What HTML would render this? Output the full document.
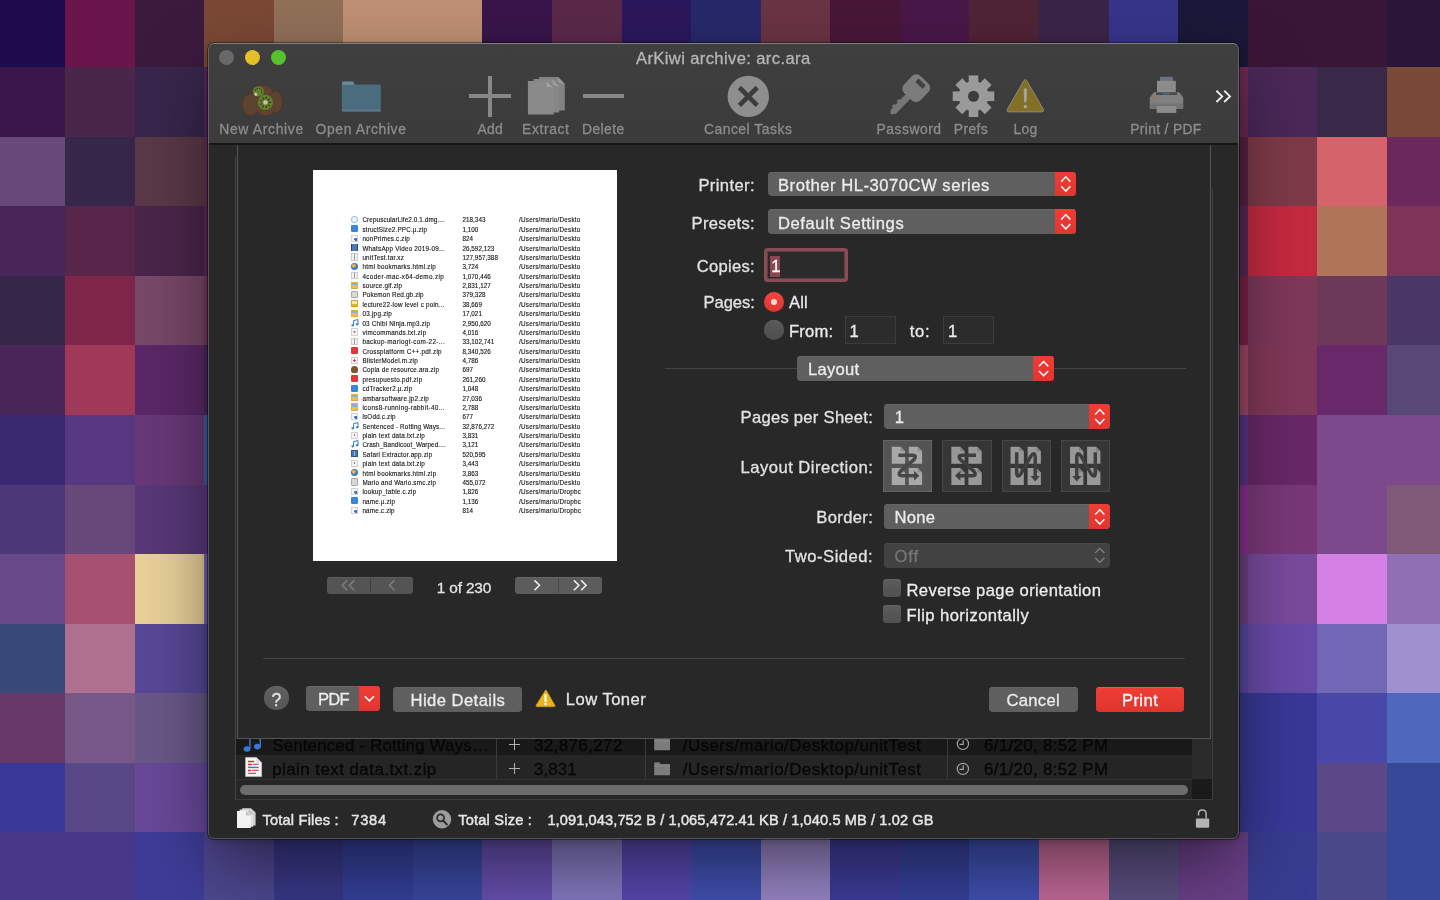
<!DOCTYPE html>
<html lang="en"><head><meta charset="utf-8"><title>ArKiwi archive: arc.ara</title>
<style>
html,body{margin:0;padding:0;width:1440px;height:900px;overflow:hidden;background:#2a1a40;font-family:"Liberation Sans",sans-serif}
#mos{position:absolute;left:0;top:0;width:1440px;height:900px;overflow:hidden}
#mos i{position:absolute;display:block}
.a{position:absolute;display:block;box-sizing:border-box}
.t{position:absolute;white-space:pre;line-height:20px;height:20px;-webkit-text-stroke:.3px currentColor}
#shadow{position:absolute;left:209px;top:44px;width:1029px;height:794px;border-radius:6px;box-shadow:0 30px 70px -4px rgba(0,0,0,.52),0 2px 10px rgba(0,0,0,.28)}
#win{position:absolute;left:208.2px;top:42.6px;width:1030.6px;height:796.2px;border-radius:6px;background:#282828;overflow:hidden;box-shadow:0 0 0 .6px rgba(0,0,0,.75)}
#tb{position:absolute;left:0;top:0;width:100%;height:101px;background:linear-gradient(#3f3f3f,#3b3b3b);box-sizing:border-box;border-radius:6px 6px 0 0}
#winb{position:absolute;left:208.2px;top:42.6px;width:1030.6px;height:796.2px;border-radius:6px;box-sizing:border-box;border:1px solid rgba(255,255,255,.2);border-top-color:rgba(255,255,255,.34);pointer-events:none}
svg{position:absolute;overflow:visible}

#root{position:absolute;left:0;top:0;width:1440px;height:900px;will-change:transform}

</style></head>
<body>
<div id="mos"><i style="left:0px;top:0px;width:66.55px;height:68.7px;background:#1c0a4c"></i><i style="left:65.05px;top:0px;width:71.07px;height:68.7px;background:#6a164c"></i><i style="left:134.62px;top:0px;width:71.07px;height:68.7px;background:#3c1a3e"></i><i style="left:204.19px;top:0px;width:71.07px;height:68.7px;background:#7a4835"></i><i style="left:273.76px;top:0px;width:71.07px;height:68.7px;background:#917058"></i><i style="left:343.33px;top:0px;width:71.07px;height:68.7px;background:#be9074"></i><i style="left:412.9px;top:0px;width:71.07px;height:68.7px;background:#be9074"></i><i style="left:482.47px;top:0px;width:71.07px;height:68.7px;background:#38154a"></i><i style="left:552.04px;top:0px;width:71.07px;height:68.7px;background:#5a2849"></i><i style="left:621.61px;top:0px;width:71.07px;height:68.7px;background:#2a185c"></i><i style="left:691.18px;top:0px;width:71.07px;height:68.7px;background:#27286a"></i><i style="left:760.75px;top:0px;width:71.07px;height:68.7px;background:#693443"></i><i style="left:830.32px;top:0px;width:71.07px;height:68.7px;background:#481736"></i><i style="left:899.89px;top:0px;width:71.07px;height:68.7px;background:#481848"></i><i style="left:969.46px;top:0px;width:71.07px;height:68.7px;background:#4f2436"></i><i style="left:1039.03px;top:0px;width:71.07px;height:68.7px;background:#3a2548"></i><i style="left:1108.6px;top:0px;width:71.07px;height:68.7px;background:#37358a"></i><i style="left:1178.17px;top:0px;width:71.07px;height:68.7px;background:#1a1738"></i><i style="left:1247.74px;top:0px;width:71.07px;height:68.7px;background:#3a1636"></i><i style="left:1317.31px;top:0px;width:71.07px;height:68.7px;background:#3a1636"></i><i style="left:1386.88px;top:0px;width:54.62px;height:68.7px;background:#2a1638"></i><i style="left:0px;top:67.2px;width:66.55px;height:71.05px;background:#38164c"></i><i style="left:65.05px;top:67.2px;width:71.07px;height:71.05px;background:#4a264a"></i><i style="left:134.62px;top:67.2px;width:71.07px;height:71.05px;background:#38264c"></i><i style="left:204.19px;top:67.2px;width:71.07px;height:71.05px;background:#56285c"></i><i style="left:1178.17px;top:67.2px;width:71.07px;height:71.05px;background:#6a2a52"></i><i style="left:1247.74px;top:67.2px;width:71.07px;height:71.05px;background:#4a2858"></i><i style="left:1317.31px;top:67.2px;width:71.07px;height:71.05px;background:#392848"></i><i style="left:1386.88px;top:67.2px;width:54.62px;height:71.05px;background:#7a4a38"></i><i style="left:0px;top:136.75px;width:66.55px;height:71.05px;background:#684878"></i><i style="left:65.05px;top:136.75px;width:71.07px;height:71.05px;background:#36264a"></i><i style="left:134.62px;top:136.75px;width:71.07px;height:71.05px;background:#5a3848"></i><i style="left:204.19px;top:136.75px;width:71.07px;height:71.05px;background:#6a3058"></i><i style="left:1178.17px;top:136.75px;width:71.07px;height:71.05px;background:#5a2044"></i><i style="left:1247.74px;top:136.75px;width:71.07px;height:71.05px;background:#7e3a48"></i><i style="left:1317.31px;top:136.75px;width:71.07px;height:71.05px;background:#d4636b"></i><i style="left:1386.88px;top:136.75px;width:54.62px;height:71.05px;background:#6b285c"></i><i style="left:0px;top:206.3px;width:66.55px;height:71.05px;background:#48265a"></i><i style="left:65.05px;top:206.3px;width:71.07px;height:71.05px;background:#58264a"></i><i style="left:134.62px;top:206.3px;width:71.07px;height:71.05px;background:#4a264a"></i><i style="left:204.19px;top:206.3px;width:71.07px;height:71.05px;background:#62285e"></i><i style="left:1178.17px;top:206.3px;width:71.07px;height:71.05px;background:#5a2858"></i><i style="left:1247.74px;top:206.3px;width:71.07px;height:71.05px;background:#c42a40"></i><i style="left:1317.31px;top:206.3px;width:71.07px;height:71.05px;background:#b07458"></i><i style="left:1386.88px;top:206.3px;width:54.62px;height:71.05px;background:#7e3458"></i><i style="left:0px;top:275.85px;width:66.55px;height:71.05px;background:#36264a"></i><i style="left:65.05px;top:275.85px;width:71.07px;height:71.05px;background:#80264a"></i><i style="left:134.62px;top:275.85px;width:71.07px;height:71.05px;background:#784868"></i><i style="left:204.19px;top:275.85px;width:71.07px;height:71.05px;background:#7a3c68"></i><i style="left:1178.17px;top:275.85px;width:71.07px;height:71.05px;background:#7a2248"></i><i style="left:1247.74px;top:275.85px;width:71.07px;height:71.05px;background:#7e3858"></i><i style="left:1317.31px;top:275.85px;width:71.07px;height:71.05px;background:#6c3a58"></i><i style="left:1386.88px;top:275.85px;width:54.62px;height:71.05px;background:#4b3668"></i><i style="left:0px;top:345.4px;width:66.55px;height:71.05px;background:#48265a"></i><i style="left:65.05px;top:345.4px;width:71.07px;height:71.05px;background:#a03858"></i><i style="left:134.62px;top:345.4px;width:71.07px;height:71.05px;background:#5a2868"></i><i style="left:204.19px;top:345.4px;width:71.07px;height:71.05px;background:#4e2664"></i><i style="left:1178.17px;top:345.4px;width:71.07px;height:71.05px;background:#a04868"></i><i style="left:1247.74px;top:345.4px;width:71.07px;height:71.05px;background:#803858"></i><i style="left:1317.31px;top:345.4px;width:71.07px;height:71.05px;background:#68286a"></i><i style="left:1386.88px;top:345.4px;width:54.62px;height:71.05px;background:#584878"></i><i style="left:0px;top:414.95px;width:66.55px;height:71.05px;background:#3a2870"></i><i style="left:65.05px;top:414.95px;width:71.07px;height:71.05px;background:#583880"></i><i style="left:134.62px;top:414.95px;width:71.07px;height:71.05px;background:#683878"></i><i style="left:204.19px;top:414.95px;width:71.07px;height:71.05px;background:#3f62a8"></i><i style="left:1178.17px;top:414.95px;width:71.07px;height:71.05px;background:#5a3488"></i><i style="left:1247.74px;top:414.95px;width:71.07px;height:71.05px;background:#682868"></i><i style="left:1317.31px;top:414.95px;width:71.07px;height:71.05px;background:#7c4a8c"></i><i style="left:1386.88px;top:414.95px;width:54.62px;height:71.05px;background:#7c4a8c"></i><i style="left:0px;top:484.5px;width:66.55px;height:71.05px;background:#4a3878"></i><i style="left:65.05px;top:484.5px;width:71.07px;height:71.05px;background:#684878"></i><i style="left:134.62px;top:484.5px;width:71.07px;height:71.05px;background:#583878"></i><i style="left:204.19px;top:484.5px;width:71.07px;height:71.05px;background:#603888"></i><i style="left:1178.17px;top:484.5px;width:71.07px;height:71.05px;background:#8a3090"></i><i style="left:1247.74px;top:484.5px;width:71.07px;height:71.05px;background:#783878"></i><i style="left:1317.31px;top:484.5px;width:71.07px;height:71.05px;background:#7c4a8c"></i><i style="left:1386.88px;top:484.5px;width:54.62px;height:71.05px;background:#805878"></i><i style="left:0px;top:554.05px;width:66.55px;height:71.05px;background:#684888"></i><i style="left:65.05px;top:554.05px;width:71.07px;height:71.05px;background:#a85070"></i><i style="left:134.62px;top:554.05px;width:71.07px;height:71.05px;background:#e8d098"></i><i style="left:204.19px;top:554.05px;width:71.07px;height:71.05px;background:#7662b4"></i><i style="left:1178.17px;top:554.05px;width:71.07px;height:71.05px;background:#704080"></i><i style="left:1247.74px;top:554.05px;width:71.07px;height:71.05px;background:#784a9c"></i><i style="left:1317.31px;top:554.05px;width:71.07px;height:71.05px;background:#d480e4"></i><i style="left:1386.88px;top:554.05px;width:54.62px;height:71.05px;background:#9070b4"></i><i style="left:0px;top:623.6px;width:66.55px;height:71.05px;background:#384878"></i><i style="left:65.05px;top:623.6px;width:71.07px;height:71.05px;background:#b07090"></i><i style="left:134.62px;top:623.6px;width:71.07px;height:71.05px;background:#584898"></i><i style="left:204.19px;top:623.6px;width:71.07px;height:71.05px;background:#4e46a0"></i><i style="left:1178.17px;top:623.6px;width:71.07px;height:71.05px;background:#5848a0"></i><i style="left:1247.74px;top:623.6px;width:71.07px;height:71.05px;background:#684aa8"></i><i style="left:1317.31px;top:623.6px;width:71.07px;height:71.05px;background:#7068b4"></i><i style="left:1386.88px;top:623.6px;width:54.62px;height:71.05px;background:#a090d0"></i><i style="left:0px;top:693.15px;width:66.55px;height:71.05px;background:#683868"></i><i style="left:65.05px;top:693.15px;width:71.07px;height:71.05px;background:#785888"></i><i style="left:134.62px;top:693.15px;width:71.07px;height:71.05px;background:#685888"></i><i style="left:204.19px;top:693.15px;width:71.07px;height:71.05px;background:#5e5488"></i><i style="left:1178.17px;top:693.15px;width:71.07px;height:71.05px;background:#383890"></i><i style="left:1247.74px;top:693.15px;width:71.07px;height:71.05px;background:#383898"></i><i style="left:1317.31px;top:693.15px;width:71.07px;height:71.05px;background:#4848a8"></i><i style="left:1386.88px;top:693.15px;width:54.62px;height:71.05px;background:#4f68bc"></i><i style="left:0px;top:762.7px;width:66.55px;height:71.05px;background:#383898"></i><i style="left:65.05px;top:762.7px;width:71.07px;height:71.05px;background:#584888"></i><i style="left:134.62px;top:762.7px;width:71.07px;height:71.05px;background:#684898"></i><i style="left:204.19px;top:762.7px;width:71.07px;height:71.05px;background:#6048a8"></i><i style="left:1178.17px;top:762.7px;width:71.07px;height:71.05px;background:#383890"></i><i style="left:1247.74px;top:762.7px;width:71.07px;height:71.05px;background:#383898"></i><i style="left:1317.31px;top:762.7px;width:71.07px;height:71.05px;background:#5a4888"></i><i style="left:1386.88px;top:762.7px;width:54.62px;height:71.05px;background:#384898"></i><i style="left:0px;top:832.25px;width:66.55px;height:69.25px;background:#483888"></i><i style="left:65.05px;top:832.25px;width:71.07px;height:69.25px;background:#483888"></i><i style="left:134.62px;top:832.25px;width:71.07px;height:69.25px;background:#3f3c98"></i><i style="left:204.19px;top:832.25px;width:71.07px;height:69.25px;background:#4e4890"></i><i style="left:273.76px;top:832.25px;width:71.07px;height:69.25px;background:#383888"></i><i style="left:343.33px;top:832.25px;width:71.07px;height:69.25px;background:#35409a"></i><i style="left:412.9px;top:832.25px;width:71.07px;height:69.25px;background:#3a48a2"></i><i style="left:482.47px;top:832.25px;width:71.07px;height:69.25px;background:#6650ae"></i><i style="left:552.04px;top:832.25px;width:71.07px;height:69.25px;background:#867ac2"></i><i style="left:621.61px;top:832.25px;width:71.07px;height:69.25px;background:#5848b0"></i><i style="left:691.18px;top:832.25px;width:71.07px;height:69.25px;background:#4050b0"></i><i style="left:760.75px;top:832.25px;width:71.07px;height:69.25px;background:#9886c6"></i><i style="left:830.32px;top:832.25px;width:71.07px;height:69.25px;background:#3e3c9a"></i><i style="left:899.89px;top:832.25px;width:71.07px;height:69.25px;background:#36409a"></i><i style="left:969.46px;top:832.25px;width:71.07px;height:69.25px;background:#4050b0"></i><i style="left:1039.03px;top:832.25px;width:71.07px;height:69.25px;background:#c46a98"></i><i style="left:1108.6px;top:832.25px;width:71.07px;height:69.25px;background:#5a5080"></i><i style="left:1178.17px;top:832.25px;width:71.07px;height:69.25px;background:#6a4088"></i><i style="left:1247.74px;top:832.25px;width:71.07px;height:69.25px;background:#383c90"></i><i style="left:1317.31px;top:832.25px;width:71.07px;height:69.25px;background:#4a4888"></i><i style="left:1386.88px;top:832.25px;width:54.62px;height:69.25px;background:#384898"></i></div>
<div id="root">
<div id="shadow"></div>
<div id="win"><div id="tb"></div></div>
<div class="a" style="left:209px;top:143.3px;width:1029px;height:1.7px;background:#161616"></div>
<div class="a" style="left:218.9px;top:49.8px;width:15.2px;height:15.2px;border-radius:50%;background:#686868"></div>
<div class="a" style="left:244.9px;top:49.8px;width:15.2px;height:15.2px;border-radius:50%;background:#e5bf2a"></div>
<div class="a" style="left:270.9px;top:49.8px;width:15.2px;height:15.2px;border-radius:50%;background:#55c22e"></div>
<span class="t" style="left:636.00px;top:49.20px;font-size:16.6px;color:#b6b6b6;letter-spacing:0.369px;">ArKiwi archive: arc.ara</span>
<span class="t" style="left:219.25px;top:119.00px;font-size:13.9px;color:#8c8c8c;letter-spacing:0.671px;">New Archive</span>
<span class="t" style="left:315.50px;top:119.00px;font-size:13.9px;color:#8c8c8c;letter-spacing:0.639px;">Open Archive</span>
<span class="t" style="left:477.50px;top:119.00px;font-size:13.9px;color:#8c8c8c;letter-spacing:0.312px;">Add</span>
<span class="t" style="left:522.00px;top:119.00px;font-size:13.9px;color:#8c8c8c;letter-spacing:0.618px;">Extract</span>
<span class="t" style="left:582.00px;top:119.00px;font-size:13.9px;color:#8c8c8c;letter-spacing:0.426px;">Delete</span>
<span class="t" style="left:703.90px;top:119.00px;font-size:13.9px;color:#8c8c8c;letter-spacing:0.508px;">Cancel Tasks</span>
<span class="t" style="left:876.60px;top:119.00px;font-size:13.9px;color:#8c8c8c;letter-spacing:0.487px;">Password</span>
<span class="t" style="left:953.75px;top:119.00px;font-size:13.9px;color:#8c8c8c;letter-spacing:0.406px;">Prefs</span>
<span class="t" style="left:1013.40px;top:119.00px;font-size:13.9px;color:#8c8c8c;letter-spacing:0.365px;">Log</span>
<span class="t" style="left:1130.30px;top:119.00px;font-size:13.9px;color:#8c8c8c;letter-spacing:0.312px;">Print / PDF</span>
<svg style="left:0;top:0" width="1" height="1" ><g fill="#5e4430" stroke="#4c3524" stroke-width=".8"><ellipse cx="262.4" cy="92.4" rx="10.2" ry="7.4"/><ellipse cx="275.4" cy="102" rx="7" ry="10.8"/><ellipse cx="250.8" cy="104.6" rx="8.6" ry="11"/><ellipse cx="265.6" cy="110" rx="8.6" ry="5.8"/></g><rect x="252" y="98" width="22" height="12" fill="#5e4430"/><ellipse cx="258.4" cy="91.4" rx="5.6" ry="5.2" fill="#65802a"/><circle cx="255.6" cy="90.2" r=".7" fill="#2e3418"/><circle cx="257.2" cy="88.5" r=".7" fill="#2e3418"/><circle cx="259.7" cy="88.4" r=".7" fill="#2e3418"/><circle cx="261.5" cy="89.9" r=".7" fill="#2e3418"/><circle cx="261.6" cy="92.2" r=".7" fill="#2e3418"/><path d="M255.6 92.2L257.6 94.2L256 96.4L254 94.4Z" fill="#c9c6bc"/><circle cx="265.4" cy="102.4" r="7.6" fill="#65802a"/><circle cx="265.4" cy="102.4" r="2.2" fill="#c4c4bc"/><ellipse cx="270.0" cy="102.4" rx="1.3" ry=".6" transform="rotate(0 270.0 102.4)" fill="#2b3016"/><ellipse cx="268.9" cy="105.4" rx="1.3" ry=".6" transform="rotate(40 268.9 105.4)" fill="#2b3016"/><ellipse cx="266.2" cy="106.9" rx="1.3" ry=".6" transform="rotate(80 266.2 106.9)" fill="#2b3016"/><ellipse cx="263.1" cy="106.4" rx="1.3" ry=".6" transform="rotate(120 263.1 106.4)" fill="#2b3016"/><ellipse cx="261.1" cy="104.0" rx="1.3" ry=".6" transform="rotate(160 261.1 104.0)" fill="#2b3016"/><ellipse cx="261.1" cy="100.8" rx="1.3" ry=".6" transform="rotate(200 261.1 100.8)" fill="#2b3016"/><ellipse cx="263.1" cy="98.4" rx="1.3" ry=".6" transform="rotate(240 263.1 98.4)" fill="#2b3016"/><ellipse cx="266.2" cy="97.9" rx="1.3" ry=".6" transform="rotate(280 266.2 97.9)" fill="#2b3016"/><ellipse cx="268.9" cy="99.4" rx="1.3" ry=".6" transform="rotate(320 268.9 99.4)" fill="#2b3016"/></svg>
<svg style="left:0;top:0" width="1" height="1" ><path d="M341.8 82.4Q341.8 81.2 343 81.2H352.6Q353.6 81.2 354 82.2L354.8 84.6H379.6Q380.8 84.6 380.8 85.8V110.4Q380.8 111.6 379.6 111.6H343Q341.8 111.6 341.8 110.4Z" fill="#4b6b7f"/><path d="M342.4 82.6Q342.4 81.8 343.2 81.8H352.4Q353.2 81.8 353.5 82.6L354.2 84.8H342.4Z" fill="#6f8897"/><path d="M342 109.4H380.6V110.6Q380.6 111.4 379.6 111.4H343Q342 111.4 342 110.6Z" fill="#5b7a8c"/></svg>
<div class="a" style="left:469.4px;top:94.1px;width:41.9px;height:4.0px;background:#888888"></div>
<div class="a" style="left:488.1px;top:75.6px;width:4.0px;height:41.3px;background:#888888"></div>
<svg style="left:0;top:0" width="1" height="1" ><path d="M539.2 76.9H557.8L564.8 83.9V110.6H539.2Z" fill="#828282"/><path d="M533.6 78.9H552.2L559.2 85.9V112.5H533.6Z" fill="#868686"/><path d="M527.9 81.0H546.8L553.8 88.0V114.4H527.9Z" fill="#8a8a8a"/><path d="M546.6 81.2V87.6Q548 85.8 553.6 88.2Z" fill="#a2a2a2"/><path d="M552.4 79V84.4L557 86.6L559.2 86Z" fill="#9c9c9c"/><path d="M558 77V82L562.4 84.2L564.6 83.8Z" fill="#989898"/></svg>
<div class="a" style="left:582.5px;top:94.1px;width:41.5px;height:4.0px;background:#888888"></div>
<svg style="left:0;top:0" width="1" height="1" ><circle cx="748.3" cy="96.4" r="20.7" fill="#8e8e8e"/><path d="M739.4 87.5L757.2 105.3M757.2 87.5L739.4 105.3" stroke="#3c3c3c" stroke-width="4.6" fill="none"/></svg>
<svg style="left:0;top:0" width="1" height="1" ><g transform="rotate(44 915.8 88.6)"><rect x="904.4" y="76.2" width="22.8" height="23.6" rx="6" fill="#7c7c7c"/><rect x="910.8" y="79.4" width="10" height="4.8" rx=".8" fill="#414141"/><path d="M912.5 99H919V120.6L915.8 124.6L912.5 121.6V118.6L910.7 117.4V115.2L912.5 114V111.6L910.7 110.4V108.2L912.5 107Z" fill="#767676"/></g></svg>
<svg style="left:0;top:0" width="1" height="1" ><g fill="#9a9a9a"><rect x="968.70" y="75.45" width="9.6" height="12" transform="rotate(0 973.50 96.25)"/><rect x="968.70" y="75.45" width="9.6" height="12" transform="rotate(45 973.50 96.25)"/><rect x="968.70" y="75.45" width="9.6" height="12" transform="rotate(90 973.50 96.25)"/><rect x="968.70" y="75.45" width="9.6" height="12" transform="rotate(135 973.50 96.25)"/><rect x="968.70" y="75.45" width="9.6" height="12" transform="rotate(180 973.50 96.25)"/><rect x="968.70" y="75.45" width="9.6" height="12" transform="rotate(225 973.50 96.25)"/><rect x="968.70" y="75.45" width="9.6" height="12" transform="rotate(270 973.50 96.25)"/><rect x="968.70" y="75.45" width="9.6" height="12" transform="rotate(315 973.50 96.25)"/><circle cx="973.50" cy="96.25" r="15"/></g><circle cx="973.50" cy="96.25" r="5.5" fill="#3c3c3c"/></svg>
<svg style="left:0;top:0" width="1" height="1" ><path d="M1023.9 80.6Q1025.3 78.4 1026.7 80.6L1043.3 109.4Q1044.3 111.8 1041.8 111.9H1008.8Q1006.3 111.8 1007.3 109.4Z" fill="#846f27" stroke="#8f8a78" stroke-width="1"/><path d="M1025.3 88.2L1026.5 89.6L1025.9 102H1024.7L1024.1 89.6Z" fill="#a8a8a8" stroke="#a8a8a8" stroke-width=".8" stroke-linejoin="round"/><circle cx="1025.3" cy="106.6" r="1.7" fill="#a8a8a8"/></svg>
<svg style="left:0;top:0" width="1" height="1" ><rect x="1160" y="76.8" width="12.9" height="4.2" fill="#6c7282"/><rect x="1157" y="80.8" width="18.8" height="11.6" fill="#8e8e8e"/><path d="M1159.6 84.4H1173.2M1159.6 86.6H1173.2M1159.6 88.8H1173.2" stroke="#858585" stroke-width=".7"/><path d="M1154 92.2H1179.2L1183.2 97.6V107.4Q1183.2 109 1181.6 109H1151.4Q1149.8 109 1149.8 107.4V97.6Z" fill="#808080"/><rect x="1156" y="92.4" width="21" height="2.6" fill="#4a4a4e"/><rect x="1162.6" y="93" width="7" height="1.4" fill="#4a6a88"/><rect x="1149.8" y="103.6" width="33.4" height="5.4" rx="1.2" fill="#737373"/><rect x="1156.7" y="106" width="19.6" height="6.9" fill="#8c8c8c"/><rect x="1152" y="97.6" width="2.6" height="1" fill="#b06a30"/><path d="M1156 100.6H1178" stroke="#8a8a8a" stroke-width=".8" stroke-dasharray="1.6 1.6"/></svg>
<svg style="left:0;top:0" width="1" height="1" ><path d="M1216.4 90.8L1222.2 96.4L1216.4 102M1224.2 90.8L1230 96.4L1224.2 102" stroke="#ececec" stroke-width="1.9" fill="none"/></svg>
<div class="a" style="left:235px;top:156px;width:1px;height:644px;background:#444"></div>
<div class="a" style="left:1212px;top:188px;width:1px;height:612px;background:#3e3e3e"></div>
<div class="a" style="left:237px;top:145px;width:974px;height:593.7px;background:#282828;border:1px solid #545454;border-top:none"></div>
<div class="a" style="left:313px;top:170px;width:303.5px;height:391.4px;background:#fff"></div>
<div class="a" style="left:351.2px;top:215.9px;width:7.0px;height:7.2px;border-radius:50%;border:1px solid #9cc3e8;background:#eef5fb"></div>
<span class="t" style="left:362.40px;top:210.40px;font-size:6.3px;color:#141414;letter-spacing:0.123px;line-height:10px;height:10px;margin-top:5px;-webkit-text-stroke:.12px #141414;">CrepuscularLife2.0.1.dmg....</span>
<span class="t" style="left:462.40px;top:210.40px;font-size:6.3px;color:#141414;letter-spacing:0.052px;line-height:10px;height:10px;margin-top:5px;-webkit-text-stroke:.12px #141414;">218,343</span>
<span class="t" style="left:519.00px;top:210.40px;font-size:6.3px;color:#141414;letter-spacing:0.234px;line-height:10px;height:10px;margin-top:5px;-webkit-text-stroke:.12px #141414;">/Users/mario/Deskto</span>
<div class="a" style="left:351.2px;top:225.28px;width:7.0px;height:7.2px;background:#3b86d8;border-radius:1px"></div>
<span class="t" style="left:362.40px;top:219.78px;font-size:6.3px;color:#141414;letter-spacing:0.179px;line-height:10px;height:10px;margin-top:5px;-webkit-text-stroke:.12px #141414;">structSize2.PPC.µ.zip</span>
<span class="t" style="left:462.40px;top:219.78px;font-size:6.3px;color:#141414;letter-spacing:0.052px;line-height:10px;height:10px;margin-top:5px;-webkit-text-stroke:.12px #141414;">1,100</span>
<span class="t" style="left:519.00px;top:219.78px;font-size:6.3px;color:#141414;letter-spacing:0.234px;line-height:10px;height:10px;margin-top:5px;-webkit-text-stroke:.12px #141414;">/Users/mario/Deskto</span>
<div class="a" style="left:351.2px;top:234.65px;width:7.0px;height:7.2px;background:radial-gradient(circle at 74% 68%,#2f74c8 0 27%,#f6f6f6 33%);border:.5px solid #d2d2d2"></div>
<span class="t" style="left:362.40px;top:229.15px;font-size:6.3px;color:#141414;letter-spacing:0.186px;line-height:10px;height:10px;margin-top:5px;-webkit-text-stroke:.12px #141414;">nonPrimes.c.zip</span>
<span class="t" style="left:462.40px;top:229.15px;font-size:6.3px;color:#141414;letter-spacing:0.052px;line-height:10px;height:10px;margin-top:5px;-webkit-text-stroke:.12px #141414;">824</span>
<span class="t" style="left:519.00px;top:229.15px;font-size:6.3px;color:#141414;letter-spacing:0.234px;line-height:10px;height:10px;margin-top:5px;-webkit-text-stroke:.12px #141414;">/Users/mario/Deskto</span>
<div class="a" style="left:351.2px;top:244.03px;width:7.0px;height:7.2px;background:#4a78b8;border-left:1.5px solid #28406a;border-right:1.5px solid #28406a"></div>
<span class="t" style="left:362.40px;top:238.53px;font-size:6.3px;color:#141414;letter-spacing:0.228px;line-height:10px;height:10px;margin-top:5px;-webkit-text-stroke:.12px #141414;">WhatsApp Video 2019-09...</span>
<span class="t" style="left:462.40px;top:238.53px;font-size:6.3px;color:#141414;letter-spacing:0.052px;line-height:10px;height:10px;margin-top:5px;-webkit-text-stroke:.12px #141414;">26,592,123</span>
<span class="t" style="left:519.00px;top:238.53px;font-size:6.3px;color:#141414;letter-spacing:0.234px;line-height:10px;height:10px;margin-top:5px;-webkit-text-stroke:.12px #141414;">/Users/mario/Deskto</span>
<div class="a" style="left:351.2px;top:253.4px;width:7.0px;height:7.2px;background:linear-gradient(90deg,#f2f2f2 38%,#9a9a9a 40% 60%,#f2f2f2 62%);border:.5px solid #cccccc"></div>
<span class="t" style="left:362.40px;top:247.90px;font-size:6.3px;color:#141414;letter-spacing:0.214px;line-height:10px;height:10px;margin-top:5px;-webkit-text-stroke:.12px #141414;">unitTest.tar.xz</span>
<span class="t" style="left:462.40px;top:247.90px;font-size:6.3px;color:#141414;letter-spacing:0.052px;line-height:10px;height:10px;margin-top:5px;-webkit-text-stroke:.12px #141414;">127,957,388</span>
<span class="t" style="left:519.00px;top:247.90px;font-size:6.3px;color:#141414;letter-spacing:0.234px;line-height:10px;height:10px;margin-top:5px;-webkit-text-stroke:.12px #141414;">/Users/mario/Deskto</span>
<div class="a" style="left:351.2px;top:262.78px;width:7.0px;height:7.2px;border-radius:50%;background:radial-gradient(circle at 40% 40%,#f0b040 0 30%,#3a7ad0 32%)"></div>
<span class="t" style="left:362.40px;top:257.28px;font-size:6.3px;color:#141414;letter-spacing:0.254px;line-height:10px;height:10px;margin-top:5px;-webkit-text-stroke:.12px #141414;">html bookmarks.html.zip</span>
<span class="t" style="left:462.40px;top:257.28px;font-size:6.3px;color:#141414;letter-spacing:0.052px;line-height:10px;height:10px;margin-top:5px;-webkit-text-stroke:.12px #141414;">3,724</span>
<span class="t" style="left:519.00px;top:257.28px;font-size:6.3px;color:#141414;letter-spacing:0.234px;line-height:10px;height:10px;margin-top:5px;-webkit-text-stroke:.12px #141414;">/Users/mario/Deskto</span>
<div class="a" style="left:351.2px;top:272.16px;width:7.0px;height:7.2px;background:linear-gradient(90deg,#f2f2f2 38%,#9a9a9a 40% 60%,#f2f2f2 62%);border:.5px solid #cccccc"></div>
<span class="t" style="left:362.40px;top:266.66px;font-size:6.3px;color:#141414;letter-spacing:0.375px;line-height:10px;height:10px;margin-top:5px;-webkit-text-stroke:.12px #141414;">4coder-mac-x64-demo.zip</span>
<span class="t" style="left:462.40px;top:266.66px;font-size:6.3px;color:#141414;letter-spacing:0.052px;line-height:10px;height:10px;margin-top:5px;-webkit-text-stroke:.12px #141414;">1,070,446</span>
<span class="t" style="left:519.00px;top:266.66px;font-size:6.3px;color:#141414;letter-spacing:0.234px;line-height:10px;height:10px;margin-top:5px;-webkit-text-stroke:.12px #141414;">/Users/mario/Deskto</span>
<div class="a" style="left:351.2px;top:281.53px;width:7.0px;height:7.2px;background:linear-gradient(#7fb2e6 0 42%,#f0c040 44%);border:.5px solid #d8b040"></div>
<span class="t" style="left:362.40px;top:276.03px;font-size:6.3px;color:#141414;letter-spacing:0.199px;line-height:10px;height:10px;margin-top:5px;-webkit-text-stroke:.12px #141414;">source.gif.zip</span>
<span class="t" style="left:462.40px;top:276.03px;font-size:6.3px;color:#141414;letter-spacing:0.052px;line-height:10px;height:10px;margin-top:5px;-webkit-text-stroke:.12px #141414;">2,831,127</span>
<span class="t" style="left:519.00px;top:276.03px;font-size:6.3px;color:#141414;letter-spacing:0.234px;line-height:10px;height:10px;margin-top:5px;-webkit-text-stroke:.12px #141414;">/Users/mario/Deskto</span>
<div class="a" style="left:351.2px;top:290.91px;width:7.0px;height:7.2px;background:#d8d8d8;border:.5px solid #a8a8a8;border-radius:1px"></div>
<span class="t" style="left:362.40px;top:285.41px;font-size:6.3px;color:#141414;letter-spacing:0.156px;line-height:10px;height:10px;margin-top:5px;-webkit-text-stroke:.12px #141414;">Pokemon Red.gb.zip</span>
<span class="t" style="left:462.40px;top:285.41px;font-size:6.3px;color:#141414;letter-spacing:0.052px;line-height:10px;height:10px;margin-top:5px;-webkit-text-stroke:.12px #141414;">379,328</span>
<span class="t" style="left:519.00px;top:285.41px;font-size:6.3px;color:#141414;letter-spacing:0.234px;line-height:10px;height:10px;margin-top:5px;-webkit-text-stroke:.12px #141414;">/Users/mario/Deskto</span>
<div class="a" style="left:351.2px;top:300.28px;width:7.0px;height:7.2px;background:#f6e6b8;border:.5px solid #e0a030;box-shadow:inset 0 -3px 0 -1px #e8a838"></div>
<span class="t" style="left:362.40px;top:294.78px;font-size:6.3px;color:#141414;letter-spacing:0.219px;line-height:10px;height:10px;margin-top:5px;-webkit-text-stroke:.12px #141414;">lecture22-low level c poin...</span>
<span class="t" style="left:462.40px;top:294.78px;font-size:6.3px;color:#141414;letter-spacing:0.052px;line-height:10px;height:10px;margin-top:5px;-webkit-text-stroke:.12px #141414;">38,669</span>
<span class="t" style="left:519.00px;top:294.78px;font-size:6.3px;color:#141414;letter-spacing:0.234px;line-height:10px;height:10px;margin-top:5px;-webkit-text-stroke:.12px #141414;">/Users/mario/Deskto</span>
<div class="a" style="left:351.2px;top:309.66px;width:7.0px;height:7.2px;background:linear-gradient(#7fb2e6 0 42%,#f0c040 44%);border:.5px solid #d8b040"></div>
<span class="t" style="left:362.40px;top:304.16px;font-size:6.3px;color:#141414;letter-spacing:0.266px;line-height:10px;height:10px;margin-top:5px;-webkit-text-stroke:.12px #141414;">03.jpg.zip</span>
<span class="t" style="left:462.40px;top:304.16px;font-size:6.3px;color:#141414;letter-spacing:0.052px;line-height:10px;height:10px;margin-top:5px;-webkit-text-stroke:.12px #141414;">17,021</span>
<span class="t" style="left:519.00px;top:304.16px;font-size:6.3px;color:#141414;letter-spacing:0.234px;line-height:10px;height:10px;margin-top:5px;-webkit-text-stroke:.12px #141414;">/Users/mario/Deskto</span>
<svg style="left:350.8px;top:318.54px" width="8" height="8" viewBox="0 0 8 8"><path d="M2.6 6.2V1.6L7 .6V5.2" stroke="#2f7ad6" stroke-width="1" fill="none"/><ellipse cx="1.7" cy="6.3" rx="1.4" ry="1.1" fill="#2f7ad6"/><ellipse cx="6.1" cy="5.3" rx="1.4" ry="1.1" fill="#2f7ad6"/></svg>
<span class="t" style="left:362.40px;top:313.54px;font-size:6.3px;color:#141414;letter-spacing:0.223px;line-height:10px;height:10px;margin-top:5px;-webkit-text-stroke:.12px #141414;">03 Chibi Ninja.mp3.zip</span>
<span class="t" style="left:462.40px;top:313.54px;font-size:6.3px;color:#141414;letter-spacing:0.052px;line-height:10px;height:10px;margin-top:5px;-webkit-text-stroke:.12px #141414;">2,950,620</span>
<span class="t" style="left:519.00px;top:313.54px;font-size:6.3px;color:#141414;letter-spacing:0.234px;line-height:10px;height:10px;margin-top:5px;-webkit-text-stroke:.12px #141414;">/Users/mario/Deskto</span>
<div class="a" style="left:351.2px;top:328.41px;width:7.0px;height:7.2px;background:radial-gradient(circle at 50% 45%,#e05a5a 0 22%,#f6f6f6 28%);border:.5px solid #d2d2d2"></div>
<span class="t" style="left:362.40px;top:322.91px;font-size:6.3px;color:#141414;letter-spacing:0.276px;line-height:10px;height:10px;margin-top:5px;-webkit-text-stroke:.12px #141414;">vimcommands.txt.zip</span>
<span class="t" style="left:462.40px;top:322.91px;font-size:6.3px;color:#141414;letter-spacing:0.052px;line-height:10px;height:10px;margin-top:5px;-webkit-text-stroke:.12px #141414;">4,016</span>
<span class="t" style="left:519.00px;top:322.91px;font-size:6.3px;color:#141414;letter-spacing:0.234px;line-height:10px;height:10px;margin-top:5px;-webkit-text-stroke:.12px #141414;">/Users/mario/Deskto</span>
<div class="a" style="left:351.2px;top:337.79px;width:7.0px;height:7.2px;background:linear-gradient(90deg,#f2f2f2 38%,#9a9a9a 40% 60%,#f2f2f2 62%);border:.5px solid #cccccc"></div>
<span class="t" style="left:362.40px;top:332.29px;font-size:6.3px;color:#141414;letter-spacing:0.353px;line-height:10px;height:10px;margin-top:5px;-webkit-text-stroke:.12px #141414;">backup-mariogt-com-22-...</span>
<span class="t" style="left:462.40px;top:332.29px;font-size:6.3px;color:#141414;letter-spacing:0.052px;line-height:10px;height:10px;margin-top:5px;-webkit-text-stroke:.12px #141414;">33,102,741</span>
<span class="t" style="left:519.00px;top:332.29px;font-size:6.3px;color:#141414;letter-spacing:0.234px;line-height:10px;height:10px;margin-top:5px;-webkit-text-stroke:.12px #141414;">/Users/mario/Deskto</span>
<div class="a" style="left:351.2px;top:347.16px;width:7.0px;height:7.2px;background:#e0383a;border-radius:1px"></div>
<span class="t" style="left:362.40px;top:341.66px;font-size:6.3px;color:#141414;letter-spacing:0.251px;line-height:10px;height:10px;margin-top:5px;-webkit-text-stroke:.12px #141414;">Crossplatform C++.pdf.zip</span>
<span class="t" style="left:462.40px;top:341.66px;font-size:6.3px;color:#141414;letter-spacing:0.052px;line-height:10px;height:10px;margin-top:5px;-webkit-text-stroke:.12px #141414;">8,340,526</span>
<span class="t" style="left:519.00px;top:341.66px;font-size:6.3px;color:#141414;letter-spacing:0.234px;line-height:10px;height:10px;margin-top:5px;-webkit-text-stroke:.12px #141414;">/Users/mario/Deskto</span>
<div class="a" style="left:351.2px;top:356.54px;width:7.0px;height:7.2px;background:radial-gradient(circle,#e04040 0 35%,#f4f4f4 38%);border:.5px solid #d0d0d0"></div>
<span class="t" style="left:362.40px;top:351.04px;font-size:6.3px;color:#141414;letter-spacing:0.231px;line-height:10px;height:10px;margin-top:5px;-webkit-text-stroke:.12px #141414;">BlisterModel.m.zip</span>
<span class="t" style="left:462.40px;top:351.04px;font-size:6.3px;color:#141414;letter-spacing:0.052px;line-height:10px;height:10px;margin-top:5px;-webkit-text-stroke:.12px #141414;">4,786</span>
<span class="t" style="left:519.00px;top:351.04px;font-size:6.3px;color:#141414;letter-spacing:0.234px;line-height:10px;height:10px;margin-top:5px;-webkit-text-stroke:.12px #141414;">/Users/mario/Deskto</span>
<div class="a" style="left:351.2px;top:365.92px;width:7.0px;height:7.2px;background:#7a5a28;border-radius:50% 50% 40% 40%"></div>
<span class="t" style="left:362.40px;top:360.42px;font-size:6.3px;color:#141414;letter-spacing:0.183px;line-height:10px;height:10px;margin-top:5px;-webkit-text-stroke:.12px #141414;">Copia de resource.ara.zip</span>
<span class="t" style="left:462.40px;top:360.42px;font-size:6.3px;color:#141414;letter-spacing:0.052px;line-height:10px;height:10px;margin-top:5px;-webkit-text-stroke:.12px #141414;">697</span>
<span class="t" style="left:519.00px;top:360.42px;font-size:6.3px;color:#141414;letter-spacing:0.234px;line-height:10px;height:10px;margin-top:5px;-webkit-text-stroke:.12px #141414;">/Users/mario/Deskto</span>
<div class="a" style="left:351.2px;top:375.29px;width:7.0px;height:7.2px;background:#e0383a;border-radius:1px"></div>
<span class="t" style="left:362.40px;top:369.79px;font-size:6.3px;color:#141414;letter-spacing:0.267px;line-height:10px;height:10px;margin-top:5px;-webkit-text-stroke:.12px #141414;">presupuesto.pdf.zip</span>
<span class="t" style="left:462.40px;top:369.79px;font-size:6.3px;color:#141414;letter-spacing:0.052px;line-height:10px;height:10px;margin-top:5px;-webkit-text-stroke:.12px #141414;">261,260</span>
<span class="t" style="left:519.00px;top:369.79px;font-size:6.3px;color:#141414;letter-spacing:0.234px;line-height:10px;height:10px;margin-top:5px;-webkit-text-stroke:.12px #141414;">/Users/mario/Deskto</span>
<div class="a" style="left:351.2px;top:384.67px;width:7.0px;height:7.2px;background:#3b86d8;border-radius:1px"></div>
<span class="t" style="left:362.40px;top:379.17px;font-size:6.3px;color:#141414;letter-spacing:0.223px;line-height:10px;height:10px;margin-top:5px;-webkit-text-stroke:.12px #141414;">cdTracker2.µ.zip</span>
<span class="t" style="left:462.40px;top:379.17px;font-size:6.3px;color:#141414;letter-spacing:0.052px;line-height:10px;height:10px;margin-top:5px;-webkit-text-stroke:.12px #141414;">1,048</span>
<span class="t" style="left:519.00px;top:379.17px;font-size:6.3px;color:#141414;letter-spacing:0.234px;line-height:10px;height:10px;margin-top:5px;-webkit-text-stroke:.12px #141414;">/Users/mario/Deskto</span>
<div class="a" style="left:351.2px;top:394.04px;width:7.0px;height:7.2px;background:linear-gradient(#7fb2e6 0 42%,#f0c040 44%);border:.5px solid #d8b040"></div>
<span class="t" style="left:362.40px;top:388.54px;font-size:6.3px;color:#141414;letter-spacing:0.243px;line-height:10px;height:10px;margin-top:5px;-webkit-text-stroke:.12px #141414;">ambarsoftware.jp2.zip</span>
<span class="t" style="left:462.40px;top:388.54px;font-size:6.3px;color:#141414;letter-spacing:0.052px;line-height:10px;height:10px;margin-top:5px;-webkit-text-stroke:.12px #141414;">27,036</span>
<span class="t" style="left:519.00px;top:388.54px;font-size:6.3px;color:#141414;letter-spacing:0.234px;line-height:10px;height:10px;margin-top:5px;-webkit-text-stroke:.12px #141414;">/Users/mario/Deskto</span>
<div class="a" style="left:351.2px;top:403.42px;width:7.0px;height:7.2px;background:linear-gradient(#7fb2e6 0 42%,#f0c040 44%);border:.5px solid #d8b040"></div>
<span class="t" style="left:362.40px;top:397.92px;font-size:6.3px;color:#141414;letter-spacing:0.331px;line-height:10px;height:10px;margin-top:5px;-webkit-text-stroke:.12px #141414;">icons8-running-rabbit-40...</span>
<span class="t" style="left:462.40px;top:397.92px;font-size:6.3px;color:#141414;letter-spacing:0.052px;line-height:10px;height:10px;margin-top:5px;-webkit-text-stroke:.12px #141414;">2,788</span>
<span class="t" style="left:519.00px;top:397.92px;font-size:6.3px;color:#141414;letter-spacing:0.234px;line-height:10px;height:10px;margin-top:5px;-webkit-text-stroke:.12px #141414;">/Users/mario/Deskto</span>
<div class="a" style="left:351.2px;top:412.8px;width:7.0px;height:7.2px;background:radial-gradient(circle at 74% 68%,#2f74c8 0 27%,#f6f6f6 33%);border:.5px solid #d2d2d2"></div>
<span class="t" style="left:362.40px;top:407.30px;font-size:6.3px;color:#141414;letter-spacing:0.204px;line-height:10px;height:10px;margin-top:5px;-webkit-text-stroke:.12px #141414;">isOdd.c.zip</span>
<span class="t" style="left:462.40px;top:407.30px;font-size:6.3px;color:#141414;letter-spacing:0.052px;line-height:10px;height:10px;margin-top:5px;-webkit-text-stroke:.12px #141414;">677</span>
<span class="t" style="left:519.00px;top:407.30px;font-size:6.3px;color:#141414;letter-spacing:0.234px;line-height:10px;height:10px;margin-top:5px;-webkit-text-stroke:.12px #141414;">/Users/mario/Deskto</span>
<svg style="left:350.8px;top:421.67px" width="8" height="8" viewBox="0 0 8 8"><path d="M2.6 6.2V1.6L7 .6V5.2" stroke="#2f7ad6" stroke-width="1" fill="none"/><ellipse cx="1.7" cy="6.3" rx="1.4" ry="1.1" fill="#2f7ad6"/><ellipse cx="6.1" cy="5.3" rx="1.4" ry="1.1" fill="#2f7ad6"/></svg>
<span class="t" style="left:362.40px;top:416.67px;font-size:6.3px;color:#141414;letter-spacing:0.167px;line-height:10px;height:10px;margin-top:5px;-webkit-text-stroke:.12px #141414;">Sentenced - Rotting Ways...</span>
<span class="t" style="left:462.40px;top:416.67px;font-size:6.3px;color:#141414;letter-spacing:0.052px;line-height:10px;height:10px;margin-top:5px;-webkit-text-stroke:.12px #141414;">32,876,272</span>
<span class="t" style="left:519.00px;top:416.67px;font-size:6.3px;color:#141414;letter-spacing:0.234px;line-height:10px;height:10px;margin-top:5px;-webkit-text-stroke:.12px #141414;">/Users/mario/Deskto</span>
<div class="a" style="left:351.2px;top:431.55px;width:7.0px;height:7.2px;background:radial-gradient(circle at 50% 45%,#e05a5a 0 22%,#f6f6f6 28%);border:.5px solid #d2d2d2"></div>
<span class="t" style="left:362.40px;top:426.05px;font-size:6.3px;color:#141414;letter-spacing:0.231px;line-height:10px;height:10px;margin-top:5px;-webkit-text-stroke:.12px #141414;">plain text data.txt.zip</span>
<span class="t" style="left:462.40px;top:426.05px;font-size:6.3px;color:#141414;letter-spacing:0.052px;line-height:10px;height:10px;margin-top:5px;-webkit-text-stroke:.12px #141414;">3,831</span>
<span class="t" style="left:519.00px;top:426.05px;font-size:6.3px;color:#141414;letter-spacing:0.234px;line-height:10px;height:10px;margin-top:5px;-webkit-text-stroke:.12px #141414;">/Users/mario/Deskto</span>
<svg style="left:350.8px;top:440.42px" width="8" height="8" viewBox="0 0 8 8"><path d="M2.6 6.2V1.6L7 .6V5.2" stroke="#2f7ad6" stroke-width="1" fill="none"/><ellipse cx="1.7" cy="6.3" rx="1.4" ry="1.1" fill="#2f7ad6"/><ellipse cx="6.1" cy="5.3" rx="1.4" ry="1.1" fill="#2f7ad6"/></svg>
<span class="t" style="left:362.40px;top:435.42px;font-size:6.3px;color:#141414;letter-spacing:0.105px;line-height:10px;height:10px;margin-top:5px;-webkit-text-stroke:.12px #141414;">Crash_Bandicoot_Warped....</span>
<span class="t" style="left:462.40px;top:435.42px;font-size:6.3px;color:#141414;letter-spacing:0.052px;line-height:10px;height:10px;margin-top:5px;-webkit-text-stroke:.12px #141414;">3,121</span>
<span class="t" style="left:519.00px;top:435.42px;font-size:6.3px;color:#141414;letter-spacing:0.234px;line-height:10px;height:10px;margin-top:5px;-webkit-text-stroke:.12px #141414;">/Users/mario/Deskto</span>
<div class="a" style="left:351.2px;top:450.3px;width:7.0px;height:7.2px;background:linear-gradient(90deg,#3a7ad0 0 30%,#f0a040 31% 60%,#3a7ad0 61%);border:.5px solid #2a5aa0"></div>
<span class="t" style="left:362.40px;top:444.80px;font-size:6.3px;color:#141414;letter-spacing:0.204px;line-height:10px;height:10px;margin-top:5px;-webkit-text-stroke:.12px #141414;">Safari Extractor.app.zip</span>
<span class="t" style="left:462.40px;top:444.80px;font-size:6.3px;color:#141414;letter-spacing:0.052px;line-height:10px;height:10px;margin-top:5px;-webkit-text-stroke:.12px #141414;">520,595</span>
<span class="t" style="left:519.00px;top:444.80px;font-size:6.3px;color:#141414;letter-spacing:0.234px;line-height:10px;height:10px;margin-top:5px;-webkit-text-stroke:.12px #141414;">/Users/mario/Deskto</span>
<div class="a" style="left:351.2px;top:459.68px;width:7.0px;height:7.2px;background:radial-gradient(circle at 50% 45%,#e05a5a 0 22%,#f6f6f6 28%);border:.5px solid #d2d2d2"></div>
<span class="t" style="left:362.40px;top:454.18px;font-size:6.3px;color:#141414;letter-spacing:0.231px;line-height:10px;height:10px;margin-top:5px;-webkit-text-stroke:.12px #141414;">plain text data.txt.zip</span>
<span class="t" style="left:462.40px;top:454.18px;font-size:6.3px;color:#141414;letter-spacing:0.052px;line-height:10px;height:10px;margin-top:5px;-webkit-text-stroke:.12px #141414;">3,443</span>
<span class="t" style="left:519.00px;top:454.18px;font-size:6.3px;color:#141414;letter-spacing:0.234px;line-height:10px;height:10px;margin-top:5px;-webkit-text-stroke:.12px #141414;">/Users/mario/Deskto</span>
<div class="a" style="left:351.2px;top:469.05px;width:7.0px;height:7.2px;border-radius:50%;background:radial-gradient(circle at 40% 40%,#f0b040 0 30%,#3a7ad0 32%)"></div>
<span class="t" style="left:362.40px;top:463.55px;font-size:6.3px;color:#141414;letter-spacing:0.267px;line-height:10px;height:10px;margin-top:5px;-webkit-text-stroke:.12px #141414;">html bookmarks.html.zip</span>
<span class="t" style="left:462.40px;top:463.55px;font-size:6.3px;color:#141414;letter-spacing:0.052px;line-height:10px;height:10px;margin-top:5px;-webkit-text-stroke:.12px #141414;">3,863</span>
<span class="t" style="left:519.00px;top:463.55px;font-size:6.3px;color:#141414;letter-spacing:0.234px;line-height:10px;height:10px;margin-top:5px;-webkit-text-stroke:.12px #141414;">/Users/mario/Deskto</span>
<div class="a" style="left:351.2px;top:478.43px;width:7.0px;height:7.2px;background:#d8d8d8;border:.5px solid #a8a8a8;border-radius:1px"></div>
<span class="t" style="left:362.40px;top:472.93px;font-size:6.3px;color:#141414;letter-spacing:0.202px;line-height:10px;height:10px;margin-top:5px;-webkit-text-stroke:.12px #141414;">Mario and Wario.smc.zip</span>
<span class="t" style="left:462.40px;top:472.93px;font-size:6.3px;color:#141414;letter-spacing:0.052px;line-height:10px;height:10px;margin-top:5px;-webkit-text-stroke:.12px #141414;">455,072</span>
<span class="t" style="left:519.00px;top:472.93px;font-size:6.3px;color:#141414;letter-spacing:0.234px;line-height:10px;height:10px;margin-top:5px;-webkit-text-stroke:.12px #141414;">/Users/mario/Deskto</span>
<div class="a" style="left:351.2px;top:487.8px;width:7.0px;height:7.2px;background:radial-gradient(circle at 74% 68%,#2f74c8 0 27%,#f6f6f6 33%);border:.5px solid #d2d2d2"></div>
<span class="t" style="left:362.40px;top:482.30px;font-size:6.3px;color:#141414;letter-spacing:0.199px;line-height:10px;height:10px;margin-top:5px;-webkit-text-stroke:.12px #141414;">lookup_table.c.zip</span>
<span class="t" style="left:462.40px;top:482.30px;font-size:6.3px;color:#141414;letter-spacing:0.052px;line-height:10px;height:10px;margin-top:5px;-webkit-text-stroke:.12px #141414;">1,826</span>
<span class="t" style="left:519.00px;top:482.30px;font-size:6.3px;color:#141414;letter-spacing:0.234px;line-height:10px;height:10px;margin-top:5px;-webkit-text-stroke:.12px #141414;">/Users/mario/Dropbc</span>
<div class="a" style="left:351.2px;top:497.18px;width:7.0px;height:7.2px;background:#3b86d8;border-radius:1px"></div>
<span class="t" style="left:362.40px;top:491.68px;font-size:6.3px;color:#141414;letter-spacing:0.175px;line-height:10px;height:10px;margin-top:5px;-webkit-text-stroke:.12px #141414;">name.µ.zip</span>
<span class="t" style="left:462.40px;top:491.68px;font-size:6.3px;color:#141414;letter-spacing:0.052px;line-height:10px;height:10px;margin-top:5px;-webkit-text-stroke:.12px #141414;">1,136</span>
<span class="t" style="left:519.00px;top:491.68px;font-size:6.3px;color:#141414;letter-spacing:0.234px;line-height:10px;height:10px;margin-top:5px;-webkit-text-stroke:.12px #141414;">/Users/mario/Dropbc</span>
<div class="a" style="left:351.2px;top:506.56px;width:7.0px;height:7.2px;background:radial-gradient(circle at 74% 68%,#2f74c8 0 27%,#f6f6f6 33%);border:.5px solid #d2d2d2"></div>
<span class="t" style="left:362.40px;top:501.06px;font-size:6.3px;color:#141414;letter-spacing:0.194px;line-height:10px;height:10px;margin-top:5px;-webkit-text-stroke:.12px #141414;">name.c.zip</span>
<span class="t" style="left:462.40px;top:501.06px;font-size:6.3px;color:#141414;letter-spacing:0.052px;line-height:10px;height:10px;margin-top:5px;-webkit-text-stroke:.12px #141414;">814</span>
<span class="t" style="left:519.00px;top:501.06px;font-size:6.3px;color:#141414;letter-spacing:0.234px;line-height:10px;height:10px;margin-top:5px;-webkit-text-stroke:.12px #141414;">/Users/mario/Dropbc</span>
<div class="a" style="left:326.7px;top:577px;width:86.6px;height:16.7px;background:#545454;border-radius:3.5px;box-shadow:inset 0 .5px 0 #666"></div>
<div class="a" style="left:369.7px;top:577.5px;width:0.8px;height:15.8px;background:#404040"></div>
<div class="a" style="left:515px;top:577px;width:86.7px;height:16.7px;background:#5c5c5c;border-radius:3.5px;box-shadow:inset 0 .5px 0 #727272"></div>
<div class="a" style="left:558px;top:577.5px;width:0.8px;height:15.8px;background:#4a4a4a"></div>
<svg style="left:0;top:0" width="1" height="1"><path d="M347.20 580.40L342.20 585.30L347.20 590.20M354.40 580.40L349.40 585.30L354.40 590.20" stroke="#7c7c7c" stroke-width="1.6" fill="none"/></svg>
<svg style="left:0;top:0" width="1" height="1"><path d="M394.50 580.40L389.50 585.30L394.50 590.20" stroke="#7c7c7c" stroke-width="1.6" fill="none"/></svg>
<svg style="left:0;top:0" width="1" height="1"><path d="M534.50 580.40L539.50 585.30L534.50 590.20" stroke="#ececec" stroke-width="1.6" fill="none"/></svg>
<svg style="left:0;top:0" width="1" height="1"><path d="M573.90 580.40L578.90 585.30L573.90 590.20M581.10 580.40L586.10 585.30L581.10 590.20" stroke="#ececec" stroke-width="1.6" fill="none"/></svg>
<span class="t" style="left:436.70px;top:577.50px;font-size:15.4px;color:#e4e4e4;letter-spacing:-0.139px;">1 of 230</span>
<span class="t" style="left:698.40px;top:175.80px;font-size:16.6px;color:#e2e2e2;letter-spacing:0.389px;">Printer:</span>
<div class="a" style="left:767.6px;top:171.5px;width:308.6px;height:24.7px;background:#5f5f5f;border-radius:4px;box-shadow:inset 0 .6px 0 #6e6e6e;overflow:hidden"><div class="a" style="right:0;top:0;width:21px;height:100%;background:linear-gradient(#f03c35,#e0362f)"></div></div>
<svg style="left:0;top:0" width="1" height="1"><path d="M1061.20 181.65L1065.80 176.85L1070.40 181.65M1061.20 186.25L1065.80 191.05L1070.40 186.25" stroke="#ffffff" stroke-width="1.5" fill="none"/></svg>
<span class="t" style="left:778.00px;top:176.00px;font-size:16.6px;color:#ececec;letter-spacing:0.523px;">Brother HL-3070CW series</span>
<span class="t" style="left:691.60px;top:213.60px;font-size:16.6px;color:#e2e2e2;letter-spacing:0.310px;">Presets:</span>
<div class="a" style="left:767.6px;top:209.3px;width:308.6px;height:24.7px;background:#5f5f5f;border-radius:4px;box-shadow:inset 0 .6px 0 #6e6e6e;overflow:hidden"><div class="a" style="right:0;top:0;width:21px;height:100%;background:linear-gradient(#f03c35,#e0362f)"></div></div>
<svg style="left:0;top:0" width="1" height="1"><path d="M1061.20 219.45L1065.80 214.65L1070.40 219.45M1061.20 224.05L1065.80 228.85L1070.40 224.05" stroke="#ffffff" stroke-width="1.5" fill="none"/></svg>
<span class="t" style="left:778.00px;top:213.70px;font-size:16.6px;color:#ececec;letter-spacing:0.571px;">Default Settings</span>
<span class="t" style="left:696.70px;top:256.80px;font-size:16.6px;color:#e2e2e2;letter-spacing:0.282px;">Copies:</span>
<div class="a" style="left:763.6px;top:248.3px;width:84.0px;height:33.7px;background:#8a4a57;border-radius:3.5px"></div>
<div class="a" style="left:766.6px;top:251.3px;width:78.0px;height:27.7px;background:#2b2b2b;border:1px solid #5a4046"></div>
<div class="a" style="left:770.3px;top:256.2px;width:9.3px;height:20.4px;background:#8c4650"></div>
<span class="t" style="left:771.20px;top:257.10px;font-size:16.6px;color:#ffffff;letter-spacing:0.000px;">1</span>
<span class="t" style="left:703.60px;top:293.00px;font-size:16.6px;color:#e2e2e2;letter-spacing:-0.086px;">Pages:</span>
<div class="a" style="left:764px;top:291.8px;width:20px;height:20.0px;border-radius:50%;background:linear-gradient(#f24640,#e0362f)"></div>
<div class="a" style="left:771.1px;top:298.9px;width:5.8px;height:5.8px;border-radius:50%;background:#f8d8d6"></div>
<div class="a" style="left:764px;top:320px;width:20px;height:20px;border-radius:50%;background:linear-gradient(#5a5a5a,#4e4e4e);box-shadow:inset 0 .6px 0 #6a6a6a"></div>
<span class="t" style="left:789.00px;top:293.00px;font-size:16.6px;color:#ececec;letter-spacing:0.179px;">All</span>
<span class="t" style="left:789.00px;top:322.00px;font-size:16.6px;color:#ececec;letter-spacing:0.216px;">From:</span>
<div class="a" style="left:845px;top:316.3px;width:50.7px;height:27.4px;background:#2c2c2c;border:1px solid #3c3c3c"></div>
<span class="t" style="left:849.40px;top:322.00px;font-size:16.6px;color:#ececec;letter-spacing:0.000px;">1</span>
<span class="t" style="left:909.80px;top:322.00px;font-size:16.6px;color:#ececec;letter-spacing:0.699px;">to:</span>
<div class="a" style="left:943.2px;top:316.3px;width:51.2px;height:27.4px;background:#2c2c2c;border:1px solid #3c3c3c"></div>
<span class="t" style="left:948.00px;top:322.00px;font-size:16.6px;color:#ececec;letter-spacing:0.000px;">1</span>
<div class="a" style="left:665px;top:368.2px;width:520.5px;height:1.0px;background:#454545"></div>
<div class="a" style="left:797px;top:356.2px;width:257px;height:24.6px;background:#5f5f5f;border-radius:4px;box-shadow:inset 0 .6px 0 #6e6e6e;overflow:hidden"><div class="a" style="right:0;top:0;width:21px;height:100%;background:linear-gradient(#f03c35,#e0362f)"></div></div>
<svg style="left:0;top:0" width="1" height="1"><path d="M1039.00 366.30L1043.60 361.50L1048.20 366.30M1039.00 370.90L1043.60 375.70L1048.20 370.90" stroke="#ffffff" stroke-width="1.5" fill="none"/></svg>
<span class="t" style="left:807.90px;top:360.20px;font-size:16.6px;color:#ececec;letter-spacing:0.304px;">Layout</span>
<span class="t" style="left:740.60px;top:408.20px;font-size:16.6px;color:#e2e2e2;letter-spacing:0.269px;">Pages per Sheet:</span>
<div class="a" style="left:883.6px;top:404.2px;width:226.6px;height:24.8px;background:#5f5f5f;border-radius:4px;box-shadow:inset 0 .6px 0 #6e6e6e;overflow:hidden"><div class="a" style="right:0;top:0;width:21px;height:100%;background:linear-gradient(#f03c35,#e0362f)"></div></div>
<svg style="left:0;top:0" width="1" height="1"><path d="M1095.20 414.40L1099.80 409.60L1104.40 414.40M1095.20 419.00L1099.80 423.80L1104.40 419.00" stroke="#ffffff" stroke-width="1.5" fill="none"/></svg>
<span class="t" style="left:894.80px;top:408.20px;font-size:16.6px;color:#ececec;letter-spacing:0.000px;">1</span>
<span class="t" style="left:740.60px;top:458.10px;font-size:16.6px;color:#e2e2e2;letter-spacing:0.477px;">Layout Direction:</span>
<span class="t" style="left:816.30px;top:508.10px;font-size:16.6px;color:#e2e2e2;letter-spacing:0.350px;">Border:</span>
<div class="a" style="left:883.6px;top:504.4px;width:226.6px;height:24.8px;background:#5f5f5f;border-radius:4px;box-shadow:inset 0 .6px 0 #6e6e6e;overflow:hidden"><div class="a" style="right:0;top:0;width:21px;height:100%;background:linear-gradient(#f03c35,#e0362f)"></div></div>
<svg style="left:0;top:0" width="1" height="1"><path d="M1095.20 514.60L1099.80 509.80L1104.40 514.60M1095.20 519.20L1099.80 524.00L1104.40 519.20" stroke="#ffffff" stroke-width="1.5" fill="none"/></svg>
<span class="t" style="left:894.50px;top:508.10px;font-size:16.6px;color:#ececec;letter-spacing:0.294px;">None</span>
<span class="t" style="left:785.00px;top:546.80px;font-size:16.6px;color:#e2e2e2;letter-spacing:0.525px;">Two-Sided:</span>
<div class="a" style="left:883.6px;top:543px;width:226.6px;height:24.6px;background:#424242;border-radius:4px;box-shadow:inset 0 .5px 0 #4c4c4c"></div>
<svg style="left:0;top:0" width="1" height="1"><path d="M1095.20 553.10L1099.80 548.30L1104.40 553.10M1095.20 557.70L1099.80 562.50L1104.40 557.70" stroke="#7a7a7a" stroke-width="1.5" fill="none"/></svg>
<span class="t" style="left:894.50px;top:546.80px;font-size:16.6px;color:#767676;letter-spacing:0.909px;">Off</span>
<div class="a" style="left:883.3px;top:579.4px;width:17.6px;height:18.0px;background:linear-gradient(#5c5c5c,#505050);border-radius:3.5px;box-shadow:inset 0 .6px 0 #6c6c6c"></div>
<div class="a" style="left:883.3px;top:605.4px;width:17.6px;height:18.0px;background:linear-gradient(#5c5c5c,#505050);border-radius:3.5px;box-shadow:inset 0 .6px 0 #6c6c6c"></div>
<span class="t" style="left:906.50px;top:580.60px;font-size:16.6px;color:#ececec;letter-spacing:0.391px;">Reverse page orientation</span>
<span class="t" style="left:906.50px;top:606.30px;font-size:16.6px;color:#ececec;letter-spacing:0.438px;">Flip horizontally</span>
<div class="a" style="left:882.8px;top:440.3px;width:49.3px;height:52.0px;background:#545454;border:1px solid #646464"></div>
<svg style="left:0;top:0" width="1" height="1"><path d="M891.75 446.80H900.65L905.05 451.20V463.80H891.75ZM891.75 468.10H900.65L905.05 472.50V485.10H891.75ZM908.80 446.80H917.70L922.10 451.20V463.80H908.80ZM908.80 468.10H917.70L922.10 472.50V485.10H908.80Z" fill="#a8a8a8"/><path d="M900.65 446.80V451.20H905.05ZM900.65 468.10V472.50H905.05ZM917.70 446.80V451.20H922.10ZM917.70 468.10V472.50H922.10Z" fill="#8e8e8e"/><path d="M898.4 455.3H912.2Q917.4 455.3 914.0 459.7L900.6 471.2Q897.0 475.8 902.4 475.8H914.4" stroke="#474747" stroke-width="3.5" fill="none" stroke-linejoin="round"/><path d="M919.4 475.8L914.0 470.8L914.0 480.8Z" fill="#474747"/></svg>
<div class="a" style="left:942.4px;top:440.3px;width:49.3px;height:52.0px;background:#363636;border:1px solid #464646"></div>
<svg style="left:0;top:0" width="1" height="1"><path d="M951.35 446.80H960.25L964.65 451.20V463.80H951.35ZM951.35 468.10H960.25L964.65 472.50V485.10H951.35ZM968.40 446.80H977.30L981.70 451.20V463.80H968.40ZM968.40 468.10H977.30L981.70 472.50V485.10H968.40Z" fill="#989898"/><path d="M960.25 446.80V451.20H964.65ZM960.25 468.10V472.50H964.65ZM977.30 446.80V451.20H981.70ZM977.30 468.10V472.50H981.70Z" fill="#808080"/><path d="M976.0 455.3H962.2Q957.0 455.3 960.4 459.7L973.8 471.2Q977.4 475.8 972.0 475.8H960.0" stroke="#3e3e3e" stroke-width="3.5" fill="none" stroke-linejoin="round"/><path d="M955.0 475.8L960.4 470.8L960.4 480.8Z" fill="#3e3e3e"/></svg>
<div class="a" style="left:1001.6px;top:440.3px;width:49.3px;height:52.0px;background:#363636;border:1px solid #464646"></div>
<svg style="left:0;top:0" width="1" height="1"><path d="M1010.55 446.80H1019.45L1023.85 451.20V463.80H1010.55ZM1010.55 468.10H1019.45L1023.85 472.50V485.10H1010.55ZM1027.60 446.80H1036.50L1040.90 451.20V463.80H1027.60ZM1027.60 468.10H1036.50L1040.90 472.50V485.10H1027.60Z" fill="#989898"/><path d="M1019.45 446.80V451.20H1023.85ZM1019.45 468.10V472.50H1023.85ZM1036.50 446.80V451.20H1040.90ZM1036.50 468.10V472.50H1040.90Z" fill="#808080"/><path d="M1016.7 452.2V473.0Q1017.2 478.6 1020.8 474.0L1031.0 456.0Q1034.6 451.0 1035.2 457.0V476.4" stroke="#3e3e3e" stroke-width="3.5" fill="none" stroke-linejoin="round"/><path d="M1035.2 481.6L1030.6 476.0L1039.8 476.0Z" fill="#3e3e3e"/></svg>
<div class="a" style="left:1061.1px;top:440.3px;width:49.3px;height:52.0px;background:#363636;border:1px solid #464646"></div>
<svg style="left:0;top:0" width="1" height="1"><path d="M1070.05 446.80H1078.95L1083.35 451.20V463.80H1070.05ZM1070.05 468.10H1078.95L1083.35 472.50V485.10H1070.05ZM1087.10 446.80H1096.00L1100.40 451.20V463.80H1087.10ZM1087.10 468.10H1096.00L1100.40 472.50V485.10H1087.10Z" fill="#989898"/><path d="M1078.95 446.80V451.20H1083.35ZM1078.95 468.10V472.50H1083.35ZM1096.00 446.80V451.20H1100.40ZM1096.00 468.10V472.50H1100.40Z" fill="#808080"/><path d="M1095.3 452.2V473.0Q1094.8 478.6 1091.2 474.0L1081.0 456.0Q1077.4 451.0 1076.8 457.0V476.4" stroke="#3e3e3e" stroke-width="3.5" fill="none" stroke-linejoin="round"/><path d="M1076.8 481.6L1072.2 476.0L1081.4 476.0Z" fill="#3e3e3e"/></svg>
<div class="a" style="left:263px;top:658.3px;width:922.3px;height:1.0px;background:#434343"></div>
<div class="a" style="left:264.2px;top:685.9px;width:24.6px;height:24.6px;border-radius:50%;background:linear-gradient(#606060,#565656);box-shadow:inset 0 .6px 0 #707070"></div>
<span class="t" style="left:271.60px;top:689.80px;font-size:17.6px;color:#e6e6e6;letter-spacing:0.000px;">?</span>
<div class="a" style="left:305.8px;top:686.3px;width:74.0px;height:24.3px;background:#5f5f5f;border-radius:4px;box-shadow:inset 0 .6px 0 #6e6e6e;overflow:hidden"><div class="a" style="right:0;top:0;width:21px;height:100%;background:linear-gradient(#f03c35,#e0362f)"></div></div>
<span class="t" style="left:318.00px;top:690.20px;font-size:16.6px;color:#ececec;letter-spacing:-0.835px;">PDF</span>
<svg style="left:0;top:0" width="1" height="1"><path d="M364.8 696.2L369.4 700.8L374 696.2" stroke="#fff" stroke-width="1.6" fill="none"/></svg>
<div class="a" style="left:393.2px;top:687.4px;width:129.3px;height:24.2px;background:#5f5f5f;border-radius:4px;box-shadow:inset 0 .6px 0 #6e6e6e"></div>
<span class="t" style="left:410.50px;top:690.60px;font-size:16.6px;color:#ececec;letter-spacing:0.446px;">Hide Details</span>
<svg style="left:534.5px;top:689px" width="21" height="19" viewBox="0 0 21 19"><path d="M10.4 1.2Q10.9 .6 11.4 1.4L19.9 16.3Q20.3 17.6 19 17.7H1.9Q.6 17.6 1.1 16.3Z" fill="#eab41c" stroke="#c8960c" stroke-width=".6"/><path d="M10.5 6V12" stroke="#fff" stroke-width="2.2" stroke-linecap="round"/><circle cx="10.5" cy="15" r="1.25" fill="#fff"/></svg>
<span class="t" style="left:565.80px;top:690.40px;font-size:16.6px;color:#e6e6e6;letter-spacing:0.463px;">Low Toner</span>
<div class="a" style="left:989px;top:687.4px;width:88.5px;height:24.2px;background:#5f5f5f;border-radius:4px;box-shadow:inset 0 .6px 0 #6e6e6e"></div>
<span class="t" style="left:1006.40px;top:690.60px;font-size:16.6px;color:#ececec;letter-spacing:0.317px;">Cancel</span>
<div class="a" style="left:1095.6px;top:687.4px;width:88.4px;height:24.2px;background:linear-gradient(#f03e36,#df352e);border-radius:4px;box-shadow:inset 0 .6px 0 #f86a62"></div>
<span class="t" style="left:1121.90px;top:690.60px;font-size:16.6px;color:#ffffff;letter-spacing:0.439px;">Print</span>
<div class="a" style="left:236px;top:739px;width:956.3px;height:16px;background:#191919"></div>
<div class="a" style="left:236px;top:755px;width:956.3px;height:24px;background:#252525"></div>
<div class="a" style="left:1192.3px;top:739px;width:19.7px;height:40px;background:#2b2b2b"></div>
<div class="a" style="left:236px;top:779px;width:956.3px;height:20px;background:#262626"></div>
<div class="a" style="left:1192.3px;top:779px;width:19.7px;height:20px;background:#1a1a1a"></div>
<div class="a" style="left:235px;top:799px;width:978px;height:1px;background:#3c3c3c"></div>
<div class="a" style="left:496.3px;top:739px;width:1.0px;height:40px;background:#3a3a3a"></div>
<div class="a" style="left:645.2px;top:739px;width:1.0px;height:40px;background:#3a3a3a"></div>
<div class="a" style="left:946.6px;top:739px;width:1.0px;height:40px;background:#3a3a3a"></div>
<div class="a" style="left:236px;top:779px;width:956.3px;height:1px;background:#333"></div>
<div class="a" style="left:236px;top:739px;width:956px;height:16px;overflow:hidden"><span class="t" style="left:36.20px;top:-3.20px;font-size:16.9px;color:#070707;letter-spacing:0.172px;-webkit-text-stroke:.3px #070707;">Sentenced - Rotting Ways…</span><span class="t" style="left:298.00px;top:-3.20px;font-size:16.9px;color:#070707;letter-spacing:0.416px;-webkit-text-stroke:.3px #070707;">32,876,272</span><span class="t" style="left:446.80px;top:-3.20px;font-size:16.9px;color:#070707;letter-spacing:0.456px;-webkit-text-stroke:.3px #070707;">/Users/mario/Desktop/unitTest</span><span class="t" style="left:748.00px;top:-3.20px;font-size:16.9px;color:#070707;letter-spacing:0.341px;-webkit-text-stroke:.3px #070707;">6/1/20, 8:52 PM</span></div>
<span class="t" style="left:272.20px;top:760.10px;font-size:16.9px;color:#070707;letter-spacing:0.458px;-webkit-text-stroke:.3px #070707;">plain text data.txt.zip</span>
<span class="t" style="left:534.00px;top:760.10px;font-size:16.9px;color:#070707;letter-spacing:0.071px;-webkit-text-stroke:.3px #070707;">3,831</span>
<span class="t" style="left:682.80px;top:760.10px;font-size:16.9px;color:#070707;letter-spacing:0.456px;-webkit-text-stroke:.3px #070707;">/Users/mario/Desktop/unitTest</span>
<span class="t" style="left:984.00px;top:760.10px;font-size:16.9px;color:#070707;letter-spacing:0.341px;-webkit-text-stroke:.3px #070707;">6/1/20, 8:52 PM</span>
<div class="a" style="left:509.1px;top:743.5999999999999px;width:10.8px;height:1.4px;background:#b0b0b0"></div>
<div class="a" style="left:513.8px;top:738.9px;width:1.4px;height:10.8px;background:#b0b0b0"></div>
<div class="a" style="left:509.1px;top:768.0999999999999px;width:10.8px;height:1.4px;background:#b0b0b0"></div>
<div class="a" style="left:513.8px;top:763.4px;width:1.4px;height:10.8px;background:#b0b0b0"></div>
<div class="a" style="left:239.7px;top:785.4px;width:947.9px;height:9.3px;background:#6c6c6c;border-radius:5px"></div>
<span class="t" style="left:262.40px;top:810.30px;font-size:14.6px;color:#e6e6e6;letter-spacing:0.207px;-webkit-text-stroke:.45px #e6e6e6;">Total Files :</span>
<span class="t" style="left:351.30px;top:810.30px;font-size:14.6px;color:#e6e6e6;letter-spacing:0.780px;-webkit-text-stroke:.45px #e6e6e6;">7384</span>
<span class="t" style="left:458.20px;top:810.30px;font-size:14.6px;color:#e6e6e6;letter-spacing:0.210px;-webkit-text-stroke:.45px #e6e6e6;">Total Size :</span>
<span class="t" style="left:547.40px;top:810.30px;font-size:14.6px;color:#e6e6e6;letter-spacing:0.102px;-webkit-text-stroke:.45px #e6e6e6;">1,091,043,752 B / 1,065,472.41 KB / 1,040.5 MB / 1.02 GB</span>
<svg style="left:0;top:0" width="1" height="1" ><path d="M654.2 763.3Q654.2 762.3 655.2 762.3H659.2L660.6 763.9H669.0Q670.0 763.9 670.0 764.9V775.2H654.2Z" fill="#7c7c7c"/><path d="M654.5 765.9H669.7" stroke="#8e8e8e" stroke-width=".8"/><circle cx="962.9" cy="768.9" r="5.6" fill="none" stroke="#a2a2a2" stroke-width="1.2"/><path d="M963.2 765.3V769.3H959.5" fill="none" stroke="#a2a2a2" stroke-width="1.2"/></svg>
<div class="a" style="left:236px;top:739px;width:956px;height:16px;overflow:hidden"><svg style="left:-236px;top:-739px" width="1" height="1"><path d="M654.2 738.4Q654.2 737.4 655.2 737.4H659.2L660.6 739.0H669.0Q670.0 739.0 670.0 740.0V750.3H654.2Z" fill="#7c7c7c"/><path d="M654.5 741.0H669.7" stroke="#8e8e8e" stroke-width=".8"/><circle cx="962.9" cy="743.9" r="5.6" fill="none" stroke="#a2a2a2" stroke-width="1.2"/><path d="M963.2 740.3V744.3H959.5" fill="none" stroke="#a2a2a2" stroke-width="1.2"/><g fill="#3a78d8"><ellipse cx="247" cy="749" rx="3.4" ry="2.8"/><ellipse cx="257.4" cy="746.6" rx="3.4" ry="2.8"/><rect x="249.2" y="736" width="1.4" height="13"/><rect x="259.6" y="734" width="1.4" height="12.6"/></g></svg></div>
<svg style="left:0;top:0" width="1" height="1" ><path d="M245.6 757.6H256.4L261.6 762.6V776.6H245.6Z" fill="#f4f4f4" stroke="#cfcfcf" stroke-width=".6"/><path d="M256.4 757.6V762.6H261.6Z" fill="#d8d8d8"/><path d="M248 761.4H254M248 764.4H252M248 770.4H251" stroke="#d83030" stroke-width="1.5"/><path d="M253 764.4H258.6M252 770.4H258.6M248 773.4H256" stroke="#e05050" stroke-width="1.3"/><path d="M248 767.4H258.6" stroke="#3a78d8" stroke-width="1.4"/></svg>
<svg style="left:0;top:0" width="1" height="1" ><path d="M242.2 808.2H251L255.6 812.6V825.4H242.2Z" fill="#cfcfcf"/><path d="M239.6 809.6H248.6L253.2 814V826.8H239.6Z" fill="#e0e0e0"/><path d="M237 811H246L250.8 815.6V828H237Z" fill="#f2f2f2"/><path d="M246 811V815.6H250.8Z" fill="#c4c4c4"/><path d="M248.6 809.6V812.2L251.4 814.4H253.2Z" fill="#b8b8b8"/></svg>
<svg style="left:0;top:0" width="1" height="1" ><circle cx="442" cy="819.3" r="9.2" fill="#9c9c9c"/><circle cx="440.6" cy="817.8" r="3.5" fill="none" stroke="#2a2a2a" stroke-width="1.7"/><path d="M443.2 820.6L446.8 824.4" stroke="#2a2a2a" stroke-width="2.1" stroke-linecap="round"/></svg>
<svg style="left:0;top:0" width="1" height="1" ><rect x="1195.9" y="818.4" width="13.3" height="9.4" rx="1.1" fill="#b4b4b4"/><path d="M1198.5 815.4V813.6Q1198.5 810 1202.3 810Q1206.1 810 1206.1 813.6V818.6" fill="none" stroke="#b4b4b4" stroke-width="1.5"/></svg>
<div id="winb"></div>
</div>
</body></html>
